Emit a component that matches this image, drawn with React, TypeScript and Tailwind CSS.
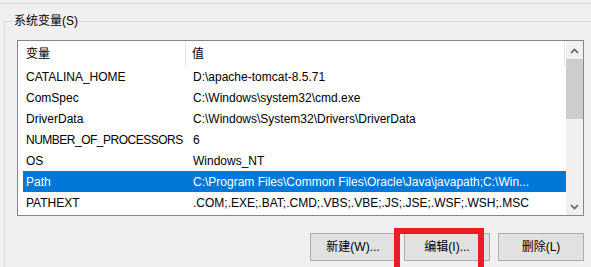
import React from 'react';

const rows = [
  { name: 'CATALINA_HOME', value: 'D:\\apache-tomcat-8.5.71' },
  { name: 'ComSpec', value: 'C:\\Windows\\system32\\cmd.exe' },
  { name: 'DriverData', value: 'C:\\Windows\\System32\\Drivers\\DriverData' },
  { name: 'NUMBER_OF_PROCESSORS', value: '6', tight: true },
  { name: 'OS', value: 'Windows_NT' },
  { name: 'Path', value: 'C:\\Program Files\\Common Files\\Oracle\\Java\\javapath;C:\\Win...', selected: true },
  { name: 'PATHEXT', value: '.COM;.EXE;.BAT;.CMD;.VBS;.VBE;.JS;.JSE;.WSF;.WSH;.MSC' },
];

const font = "font-['Liberation_Sans','Noto_Sans_CJK_SC',sans-serif]";

const WinButton = ({ label }: { label: string }) => (
  <button className="w-[86px] h-[28px] bg-[#e1e1e1] border border-[#adadad] text-[12px] text-black leading-none">
    {label}
  </button>
);

export default function App() {
  return (
    <div className={`w-[591px] h-[267px] bg-[#f0f0f0] overflow-hidden relative ${font}`}>
      {/* bottom edge of the group above */}
      <div className="pt-[3px]">
        <div className="h-px bg-[#dcdcdc]" />
      </div>

      {/* 系统变量 group */}
      <div className="relative mt-[17px] ml-[4px] border-t border-l border-[#dcdcdc] h-[250px]">
        <span className="absolute left-[8px] top-[-10px] bg-[#f0f0f0] px-px text-[12px] leading-[18px] text-black">
          系统变量(S)
        </span>

        <div className="mt-[18px] ml-[12px] w-[567px] h-[176px] border border-[#828790] bg-white flex">
          <div className="flex-1 flex flex-col">
            {/* header */}
            <div className="h-[25px] flex items-center text-[12px] text-black border-r border-[#e5e5e5] mr-px">
              <div className="w-[168px] pl-[8px] h-full flex items-center border-r border-[#e5e5e5]">变量</div>
              <div className="pl-[6px]">值</div>
            </div>
            {rows.map((r) => (
              <div
                key={r.name}
                className={`ml-[5px] h-[21px] flex items-center text-[12px] whitespace-nowrap ${
                  r.selected ? 'bg-[#0078d7] text-white' : 'text-black'
                }`}
              >
                <div className={`w-[170px] shrink-0 pl-[3px] ${r.tight ? 'tracking-[-0.5px]' : ''}`}>{r.name}</div>
                <div>{r.value}</div>
              </div>
            ))}
          </div>

          {/* vertical scrollbar */}
          <div className="w-[17px] bg-[#f0f0f0] flex flex-col">
            <div className="h-[18px] pt-px flex items-center justify-center">
              <svg width="9" height="6" viewBox="0 0 9 6">
                <path d="M1 5 L4.5 1.5 L8 5" fill="none" stroke="#606060" strokeWidth="1.6" />
              </svg>
            </div>
            <div className="h-[60px] bg-[#cdcdcd]" />
            <div className="flex-1" />
            <div className="h-[17px] flex items-center justify-center">
              <svg width="9" height="6" viewBox="0 0 9 6">
                <path d="M1 1 L4.5 4.5 L8 1" fill="none" stroke="#606060" strokeWidth="1.6" />
              </svg>
            </div>
          </div>
        </div>

        <div className="mt-[17px] flex justify-end gap-[8px] w-[579px]">
          <WinButton label="新建(W)..." />
          <WinButton label="编辑(I)..." />
          <WinButton label="删除(L)" />
        </div>

        {/* red highlight around the edit button */}
        <div className="absolute left-[389px] top-[206px] w-[90px] h-[50px] border-[6px] border-[#ed1c24]" />
      </div>
    </div>
  );
}
